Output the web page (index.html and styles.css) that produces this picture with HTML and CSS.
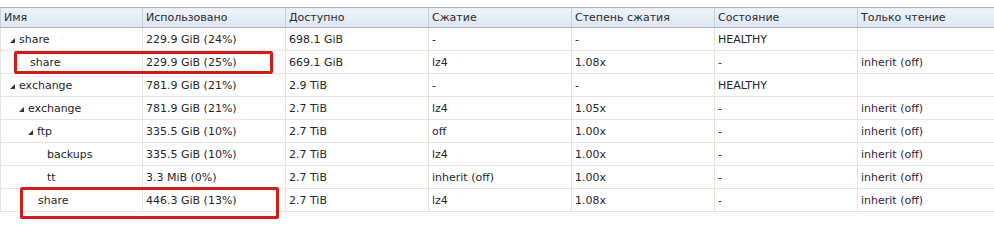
FILE: index.html
```html
<!DOCTYPE html>
<html lang="ru">
<head>
<meta charset="utf-8">
<link rel="stylesheet" href="styles.css">
</head>
<body>
<div class="grid-wrap">
<table class="grid">
  <thead>
    <tr class="head">
      <th>Имя</th><th>Использовано</th><th>Доступно</th><th>Сжатие</th><th>Степень сжатия</th><th>Состояние</th><th>Только чтение</th>
    </tr>
  </thead>
  <tbody>
    <tr><td><span class="name l0"><svg class="arw" viewBox="0 0 5 5"><path d="M5 0V5H0Z"/></svg>share</span></td><td>229.9 GiB (24%)</td><td>698.1 GiB</td><td>-</td><td>-</td><td>HEALTHY</td><td></td></tr>
    <tr><td><span class="name l1 leaf">share</span></td><td>229.9 GiB (25%)</td><td>669.1 GiB</td><td>lz4</td><td>1.08x</td><td>-</td><td class="ro">inherit (off)</td></tr>
    <tr><td><span class="name l0"><svg class="arw" viewBox="0 0 5 5"><path d="M5 0V5H0Z"/></svg>exchange</span></td><td>781.9 GiB (21%)</td><td>2.9 TiB</td><td>-</td><td>-</td><td>HEALTHY</td><td></td></tr>
    <tr><td><span class="name l1"><svg class="arw" viewBox="0 0 5 5"><path d="M5 0V5H0Z"/></svg>exchange</span></td><td>781.9 GiB (21%)</td><td>2.7 TiB</td><td>lz4</td><td>1.05x</td><td>-</td><td class="ro">inherit (off)</td></tr>
    <tr><td><span class="name l2"><svg class="arw" viewBox="0 0 5 5"><path d="M5 0V5H0Z"/></svg>ftp</span></td><td>335.5 GiB (10%)</td><td>2.7 TiB</td><td>off</td><td>1.00x</td><td>-</td><td class="ro">inherit (off)</td></tr>
    <tr><td><span class="name l3 leaf">backups</span></td><td>335.5 GiB (10%)</td><td>2.7 TiB</td><td>lz4</td><td>1.00x</td><td>-</td><td class="ro">inherit (off)</td></tr>
    <tr><td><span class="name l3 leaf">tt</span></td><td>3.3 MiB (0%)</td><td>2.7 TiB</td><td>inherit (off)</td><td>1.00x</td><td>-</td><td class="ro">inherit (off)</td></tr>
    <tr><td><span class="name l2 leaf">share</span></td><td>446.3 GiB (13%)</td><td>2.7 TiB</td><td>lz4</td><td>1.08x</td><td>-</td><td class="ro">inherit (off)</td></tr>
  </tbody>
</table>
<div class="mark mark-1"></div>
<div class="mark mark-2"></div>
</div>
</body>
</html>
```
FILE: styles.css
```css
html, body {
  margin: 0;
  padding: 0;
  background: #ffffff;
}
body {
  font-family: "DejaVu Sans", Verdana, sans-serif;
  font-size: 11px;
  color: #262626;
}
.grid-wrap {
  position: relative;
  width: 994px;
  height: 238px;
  padding-top: 7px;
  overflow: hidden;
}
.grid {
  width: 994px;
  table-layout: fixed;
  border-collapse: collapse;
}
.grid th,
.grid td {
  width: 136px;
  padding: 0 3px;
  text-align: left;
  white-space: nowrap;
  overflow: hidden;
  font-weight: normal;
  box-sizing: content-box;
}
.grid th:first-child,
.grid td:first-child {
  width: 135px;
}
.grid th:last-child,
.grid td:last-child {
  width: auto;
}
.head th {
  height: 19px;
  background: linear-gradient(#eef3f9, #dee7f1);
  border-top: 1px solid #a9b4c0;
  border-bottom: 1px solid #a9b4c0;
  border-left: 1px solid #c7d0da;
  color: #2b2b2b;
}
.grid td {
  height: 22px;
  border-bottom: 1px solid #e9e5da;
  border-left: 1px solid #e9e5da;
}
.name {
  display: flex;
  align-items: center;
  gap: 4px;
}
.arw {
  width: 5px;
  height: 5px;
  fill: #333333;
  margin-top: 2px;
}
.l0 { padding-left: 6px; }
.l1 { padding-left: 15px; }
.l2 { padding-left: 24px; }
.l3 { padding-left: 33px; }
.leaf.l1 { padding-left: 26px; }
.leaf.l2 { padding-left: 34px; }
.leaf.l3 { padding-left: 43px; }
.ro {
  color: #35233a;
}
.mark {
  position: absolute;
  border: 3px solid #cc1c1c;
  border-radius: 2px;
  box-sizing: border-box;
}
.mark-1 {
  left: 14px;
  top: 51px;
  width: 259px;
  height: 23px;
}
.mark-2 {
  left: 20px;
  top: 187px;
  width: 259px;
  height: 32px;
}
```
